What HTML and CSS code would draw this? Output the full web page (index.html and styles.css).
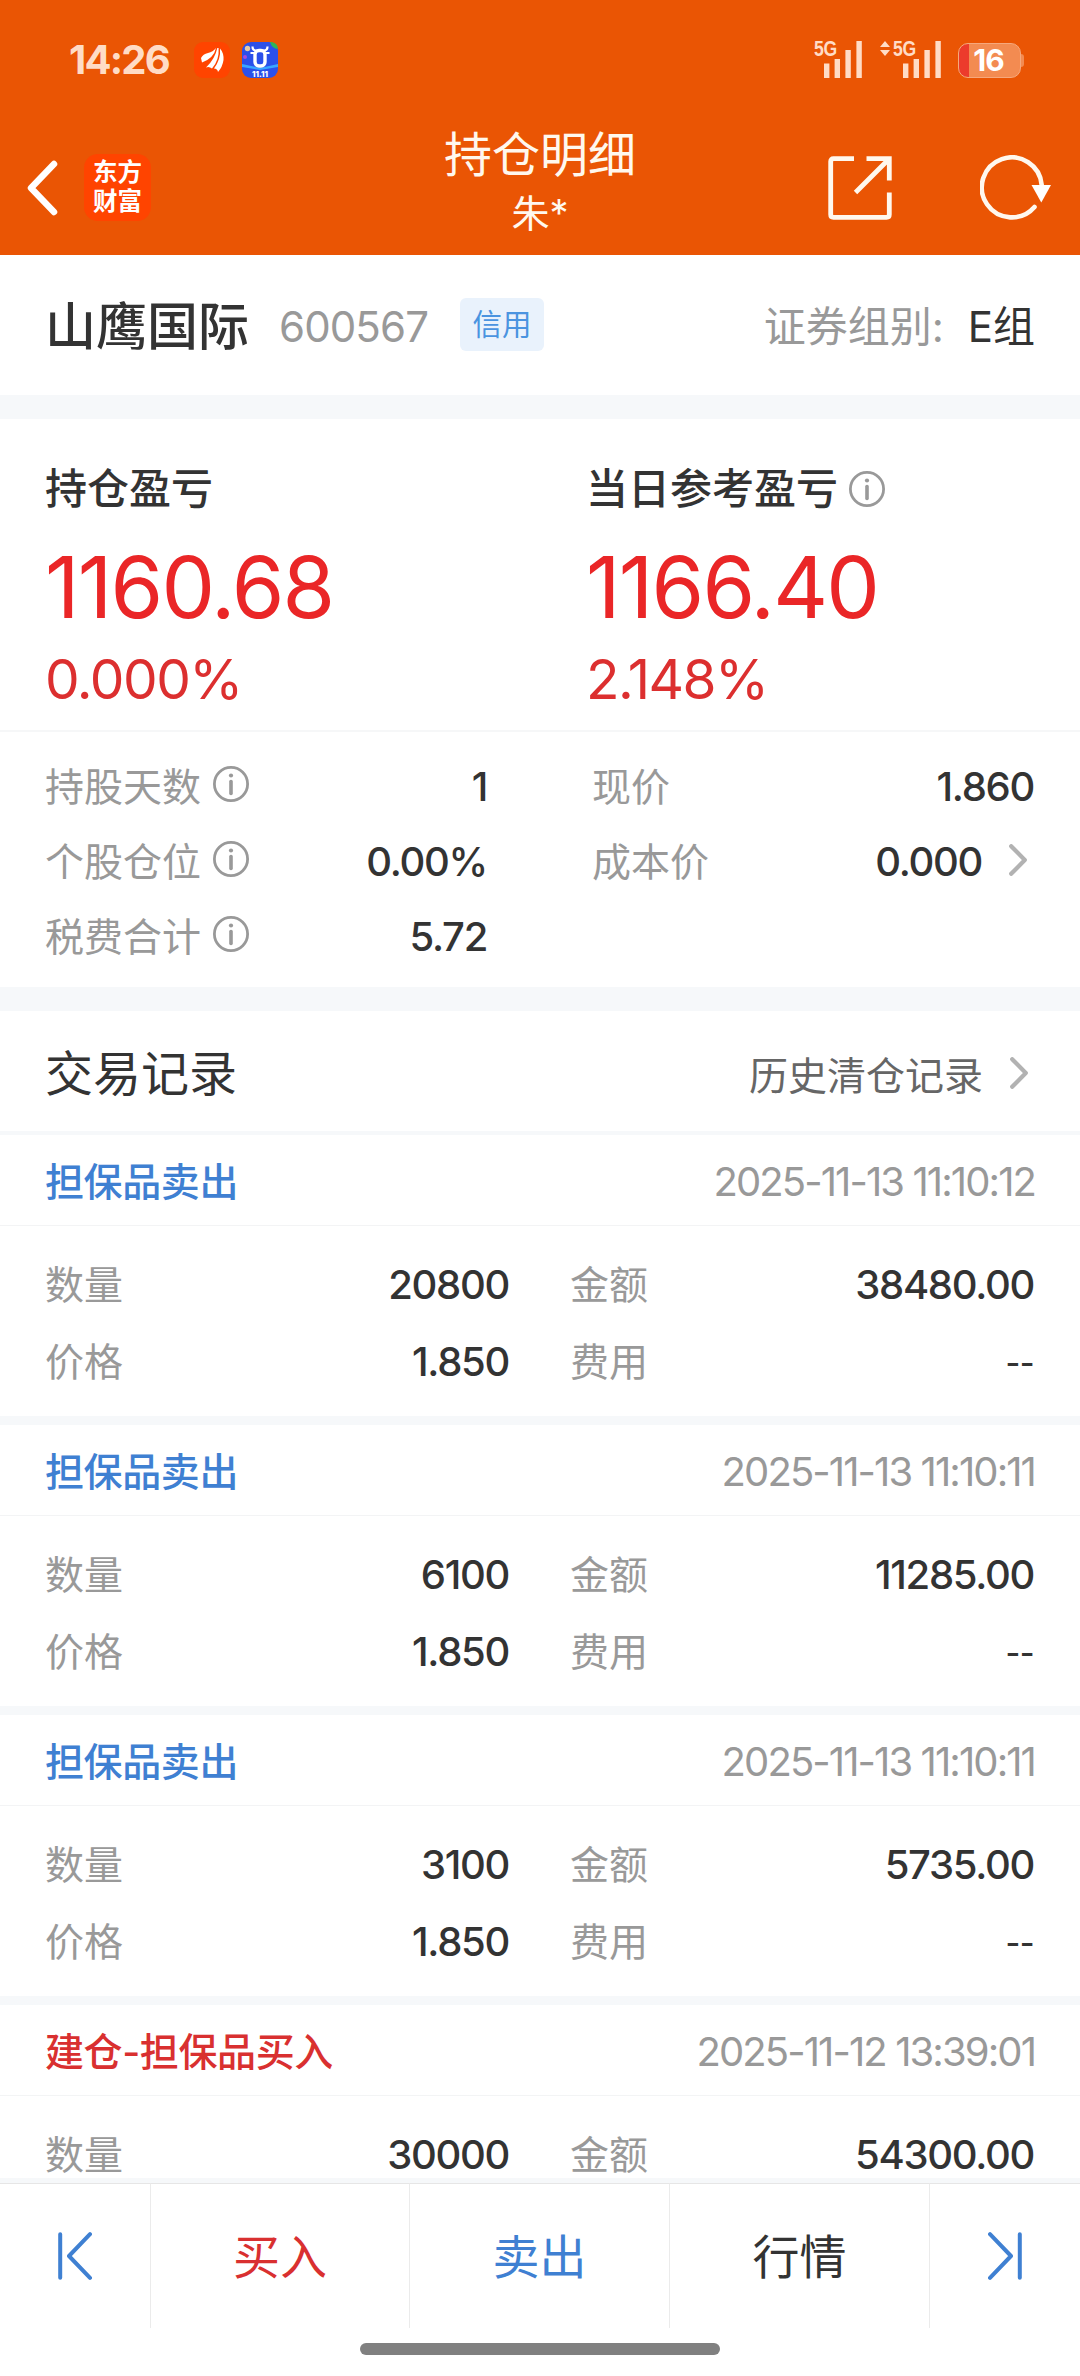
FILE: index.html
```html
<!DOCTYPE html>
<html lang="zh-CN">
<head>
  <meta charset="UTF-8" />
  <meta name="viewport" content="width=device-width, initial-scale=1" />
  <title>持仓明细</title>
  <link rel="stylesheet" href="styles.css">
</head>
<body>
  <!-- 图标 -->
  <svg class="sprite" width="0" height="0">
    <symbol id="info" viewBox="0 0 36 36">
      <circle cx="18" cy="18" r="16.6" fill="none" stroke="#999" stroke-width="2.8"/>
      <circle cx="18" cy="9.5" r="2.1" fill="#999"/>
      <path d="M18 15.5v12" stroke="#999" stroke-width="3.6" stroke-linecap="round"/>
    </symbol>
    <symbol id="more" viewBox="0 0 18 32">
      <path d="M2.2 2.2L15.8 16L2.2 29.8" fill="none" stroke="#b2b2b2" stroke-width="4.2" stroke-linecap="round" stroke-linejoin="round"/>
    </symbol>
    <symbol id="signal" viewBox="0 0 39 37">
      <path d="M0 22.5h5.4V37H0zM10.6 18H16v19h-5.4zM21.4 9h5.4v28h-5.4zM32.4 0h5.4v37h-5.4z" fill="#ffdcc6"/>
    </symbol>
  </svg>

  <div class="screen">
    <header class="header">
      <div class="status">
        <span class="time">14:26</span>
        <svg class="app-icon" viewBox="0 0 36 36">
          <rect width="36" height="36" rx="9" fill="#ff4400"/>
          <path d="M7 16Q9 12 14 11Q19 10 22 6Q20 16 8 20.500ZM12 25.500Q21 17 23.300 6H24.600Q25.500 18 18 26.500Q15 24 12 25.500ZM20 26.500Q27 17 26 6.500Q30 11 29.500 18Q28.500 25 24 30Q23.500 26.500 20 26.500Z" fill="#fff"/>
        </svg>
        <svg class="app-icon" viewBox="0 0 36 36">
          <rect width="36" height="36" rx="9" fill="#2b50ea"/>
          <path d="M0 22l18 4l18-4v3l-18 3L0 25z" fill="#39a6ff"/>
          <path d="M28 0h1q7 1 7 7q-6 0-8-7z" fill="#2fb457"/>
          <circle cx="5.500" cy="6.500" r="2.700" fill="#e4c9a8"/>
          <circle cx="3" cy="15" r="2" fill="#a64be0"/>
          <path d="M10.500 4.500Q10.500 8.500 14 8.500H22Q25.500 8.500 25.500 4.500M8.500 11H12M24 11H27.500" fill="none" stroke="#fff" stroke-width="2.200"/>
          <rect x="13" y="8.500" width="10" height="15.500" rx="4" fill="none" stroke="#fff" stroke-width="3.400"/>
          <text x="18" y="34.500" class="app-text">11.11</text>
        </svg>
        <div class="status-right">
          <div class="net">
            <span class="net-type">5G</span>
            <svg class="bars"><use href="#signal"/></svg>
          </div>
          <div class="net net-second">
            <svg class="updown" viewBox="0 0 10 15"><path d="M5 0L10 6H0zM5 15L10 9H0z" fill="#ffdcc6"/></svg>
            <span class="net-type">5G</span>
            <svg class="bars"><use href="#signal"/></svg>
          </div>
          <div class="battery"><span>16</span></div>
        </div>
      </div>
      <div class="nav">
        <div class="nav-left">
          <svg class="back" viewBox="0 0 32 56"><path d="M28 4L5 28L28 52" fill="none" stroke="#fff" stroke-width="6.500" stroke-linecap="round" stroke-linejoin="round"/></svg>
          <div class="logo">东方<br>财富</div>
        </div>
        <div class="nav-title">
          <h1>持仓明细</h1>
          <p>朱*</p>
        </div>
        <div class="nav-right">
          <svg class="share" viewBox="0 0 64 64">
            <path d="M26 2.700H5.500Q2.700 2.700 2.700 5.500V58.500Q2.700 61.300 5.500 61.300H58.500Q61.300 61.300 61.300 58.500V36.500M38.500 2.700H61.300V24.500M60 4L27.500 36.500" fill="none" stroke="#fff8ee" stroke-width="4.800"/>
          </svg>
          <svg class="refresh" viewBox="0 0 72 66">
            <path d="M54.500 52A30 30 0 1 1 61.700 30" fill="none" stroke="#fff8ee" stroke-width="4.600" stroke-linecap="round"/>
            <path d="M51.500 30H71L61.300 47.500z" fill="#fff"/>
          </svg>
        </div>
      </div>
    </header>

    <main class="content">
      <section class="stock">
        <h2>山鹰国际</h2>
        <span class="code">600567</span>
        <span class="tag">信用</span>
        <span class="group">证券组别: <b>E组</b></span>
      </section>

      <section class="profit">
        <div class="profit-col">
          <h3>持仓盈亏</h3>
          <p class="money">1160.68</p>
          <p class="percent">0.000%</p>
        </div>
        <div class="profit-col">
          <h3>当日参考盈亏 <svg class="info"><use href="#info"/></svg></h3>
          <p class="money">1166.40</p>
          <p class="percent">2.148%</p>
        </div>
      </section>

      <section class="detail">
        <div class="detail-row"><span>持股天数</span><svg class="info"><use href="#info"/></svg><b>1</b></div>
        <div class="detail-row"><span>现价</span><b>1.860</b></div>
        <div class="detail-row"><span>个股仓位</span><svg class="info"><use href="#info"/></svg><b>0.00%</b></div>
        <div class="detail-row"><span>成本价</span><b>0.000</b><svg class="more"><use href="#more"/></svg></div>
        <div class="detail-row"><span>税费合计</span><svg class="info"><use href="#info"/></svg><b>5.72</b></div>
      </section>

      <section class="records">
        <div class="records-head">
          <h2>交易记录</h2>
          <span>历史清仓记录</span>
          <svg class="more"><use href="#more"/></svg>
        </div>

        <article class="record">
          <div class="record-head"><h4 class="sell">担保品卖出</h4><time>2025-11-13 11:10:12</time></div>
          <div class="record-body">
            <div><span>数量</span><b>20800</b></div>
            <div><span>金额</span><b>38480.00</b></div>
            <div><span>价格</span><b>1.850</b></div>
            <div><span>费用</span><b class="none">--</b></div>
          </div>
        </article>

        <article class="record">
          <div class="record-head"><h4 class="sell">担保品卖出</h4><time>2025-11-13 11:10:11</time></div>
          <div class="record-body">
            <div><span>数量</span><b>6100</b></div>
            <div><span>金额</span><b>11285.00</b></div>
            <div><span>价格</span><b>1.850</b></div>
            <div><span>费用</span><b class="none">--</b></div>
          </div>
        </article>

        <article class="record">
          <div class="record-head"><h4 class="sell">担保品卖出</h4><time>2025-11-13 11:10:11</time></div>
          <div class="record-body">
            <div><span>数量</span><b>3100</b></div>
            <div><span>金额</span><b>5735.00</b></div>
            <div><span>价格</span><b>1.850</b></div>
            <div><span>费用</span><b class="none">--</b></div>
          </div>
        </article>

        <article class="record">
          <div class="record-head"><h4 class="buy">建仓-担保品买入</h4><time>2025-11-12 13:39:01</time></div>
          <div class="record-body">
            <div><span>数量</span><b>30000</b></div>
            <div><span>金额</span><b>54300.00</b></div>
          </div>
        </article>
      </section>
    </main>

    <nav class="tabs">
      <a class="tab"><svg class="step" viewBox="0 0 34 48"><path d="M2.200 2.200V45.800M32 2.200L11 24L32 45.800" fill="none" stroke="#3f80d2" stroke-width="4" stroke-linecap="round" stroke-linejoin="round"/></svg></a>
      <a class="tab buy">买入</a>
      <a class="tab sell">卖出</a>
      <a class="tab">行情</a>
      <a class="tab"><svg class="step" viewBox="0 0 34 48"><path d="M31.800 2.200V45.800M2 2.200L23 24L2 45.800" fill="none" stroke="#3f80d2" stroke-width="4" stroke-linecap="round" stroke-linejoin="round"/></svg></a>
    </nav>
    <div class="home"><i></i></div>
  </div>
</body>
</html>
```
FILE: styles.css
```css
* {
  box-sizing: border-box;
  margin: 0;
  padding: 0;
}

body {
  font-family: Inter, "Noto Sans CJK SC", sans-serif;
  font-size: 39px;
  line-height: 1;
  color: #333;
  background: #fff;
}

h1, h2, h3, h4, b {
  font-weight: 400;
}

svg {
  display: block;
  flex: none;
}

.sprite {
  position: absolute;
}

.screen {
  display: flex;
  flex-direction: column;
  width: 1080px;
  height: 2376px;
  overflow: hidden;
}

/* 顶部 */
.header {
  height: 255px;
  flex: none;
  background: #ea5504;
  color: #fff8ee;
}

.status {
  display: flex;
  align-items: center;
  height: 120px;
  padding: 0 59px 0 69px;
}

.time {
  width: 125px;
  font-size: 40px;
  font-weight: 700;
  line-height: 38px;
  letter-spacing: -1.800px;
  color: #ffdcc6;
}

.app-icon {
  width: 36px;
  height: 36px;
  margin-right: 12px;
}

.app-text {
  font-size: 8px;
  font-weight: 800;
  fill: #fff;
  text-anchor: middle;
}

.status-right {
  display: flex;
  align-items: center;
  margin-left: auto;
}

.net {
  display: flex;
  height: 37px;
  margin-top: -2px;
}

.net-second {
  margin-left: 17px;
}

.net-type {
  width: 10px;
  font-family: "Liberation Sans", sans-serif;
  font-size: 22px;
  font-weight: 700;
  line-height: 16px;
  letter-spacing: -0.500px;
  color: #ffdcc6;
  transform: scaleX(0.8);
  transform-origin: left;
}

.bars {
  width: 39px;
  height: 37px;
}

.updown {
  width: 10px;
  height: 15px;
  margin-right: 3px;
}

.battery {
  position: relative;
  width: 63px;
  height: 35px;
  margin-left: 16px;
  padding-right: 2px;
  border: 1px solid #f6a87c;
  border-radius: 10px;
  background: linear-gradient(to right, #ec3b2c 10px, #f38b51 10px);
  color: #fff;
  font-size: 30px;
  font-weight: 700;
  line-height: 33px;
  text-align: center;
}

.battery span {
  letter-spacing: -1px;
}

.battery::after {
  content: "";
  position: absolute;
  right: -4px;
  top: 10px;
  width: 3px;
  height: 13px;
  border-radius: 0 3px 3px 0;
  background: #f38b51;
}

.nav {
  display: grid;
  grid-template-columns: 1fr 300px 1fr;
  height: 135px;
}

.nav-left,
.nav-right {
  display: flex;
  align-items: center;
}

.nav-left {
  padding-left: 26px;
}

.nav-right {
  justify-content: flex-end;
  padding-right: 28px;
}

.back {
  width: 32px;
  height: 56px;
  margin-right: 26px;
}

.logo {
  width: 67px;
  height: 67px;
  padding-top: 4px;
  border-radius: 14px;
  background: #ff4400;
  color: #fff;
  font-size: 24.500px;
  font-weight: 700;
  line-height: 29px;
  text-align: center;
}

.nav-title {
  padding-top: 7px;
  text-align: center;
}

.nav-title h1 {
  font-size: 48px;
  line-height: 56px;
}

.nav-title p {
  font-size: 38px;
  line-height: 60px;
}

.share {
  width: 64px;
  height: 64px;
  margin-right: 88px;
}

.refresh {
  width: 72px;
  height: 66px;
}

/* 股票 */
.stock {
  display: flex;
  align-items: center;
  height: 164px;
  padding: 3px 45px 0 45px;
  border-bottom: 24px solid #f6f8fa;
}

.stock h2 {
  font-size: 51px;
  font-weight: 500;
}

.code {
  margin-left: 30px;
  font-size: 42px;
  letter-spacing: -0.900px;
  color: #999;
}

.tag {
  margin: -4px 0 0 32px;
  width: 84px;
  height: 53px;
  border-radius: 6px;
  background: #e9f2fc;
  color: #4a94e0;
  font-size: 29.500px;
  line-height: 53px;
  text-align: center;
}

.group {
  margin-left: auto;
  font-size: 42px;
  color: #999;
}

.group b {
  margin-left: 12px;
  color: #333;
}

/* 盈亏 */
.profit {
  display: grid;
  grid-template-columns: 541px 1fr;
  height: 313px;
  padding: 40px 0 0 45px;
  border-bottom: 2px solid #f6f7f8;
}

.profit h3 {
  display: flex;
  gap: 11px;
  font-size: 42px;
  font-weight: 500;
  line-height: 60px;
  align-items: center;
}

.info {
  width: 36px;
  height: 36px;
}

.money {
  font-size: 85px;
  line-height: 138px;
  letter-spacing: -1.800px;
  color: #ea2627;
}

.percent {
  font-size: 55px;
  line-height: 44px;
  letter-spacing: -1.500px;
  color: #dc2f2f;
}

.detail {
  display: grid;
  grid-template-columns: 442px 442px;
  column-gap: 105px;
  align-content: start;
  height: 279px;
  padding: 17px 45px 0;
  border-bottom: 24px solid #f6f8fa;
}

.detail-row {
  display: flex;
  align-items: center;
  height: 75px;
}

.detail-row span {
  color: #999;
}

.detail-row .info {
  margin: -5px 0 0 12px;
}

.detail-row b,
.record-body b {
  margin-left: auto;
  font-size: 40px;
  font-weight: 500;
  letter-spacing: -1.300px;
}

.more {
  width: 18px;
  height: 32px;
  margin: -4px 7px 0 27px;
}

/* 交易记录 */
.records-head {
  display: flex;
  align-items: center;
  height: 124px;
  padding: 5px 45px 0 45px;
  border-bottom: 4px solid #f6f8fa;
}

.records-head h2 {
  margin-right: auto;
  font-size: 48px;
}

.records-head span {
  padding-top: 3px;
  color: #666;
}

.records-head .more {
  margin-top: -1px;
}

.record {
  border-bottom: 9px solid #f6f8fa;
}

.record-head {
  display: flex;
  align-items: center;
  justify-content: space-between;
  height: 91px;
  padding: 2px 45px 0 45px;
  border-bottom: 1px solid #f3f4f5;
}

.record-head h4 {
  font-weight: 500;
  letter-spacing: -0.400px;
}

.record-head time {
  padding-top: 1px;
  font-size: 40px;
  letter-spacing: -1.900px;
  color: #999;
}

.record-body {
  display: grid;
  grid-template-columns: 464px 464px;
  column-gap: 61px;
  align-content: start;
  height: 190px;
  padding: 20px 45px 0;
}

.record-body div {
  display: flex;
  align-items: center;
  height: 77px;
}

.record-body span {
  color: #999;
}

.record-body .none {
  padding-top: 2px;
  font-size: 32px;
  letter-spacing: -0.500px;
}

.sell {
  color: #3f80d2;
}

.buy {
  color: #d93030;
}

/* 底部 */
.content {
  height: 1923px;
  flex: none;
  overflow: hidden;
}

.tabs {
  display: grid;
  grid-template-columns: 151px 259px 260px 260px 150px;
  flex: none;
  height: 150px;
  border-top: 5px solid #f6f8fa;
}

.tab {
  display: flex;
  align-items: center;
  justify-content: center;
  border-top: 1px solid #e6e6e6;
  border-right: 1px solid #ebebeb;
  font-size: 47px;
}

.tab:last-child {
  border-right: none;
}

.step {
  width: 34px;
  height: 48px;
}

.home {
  display: flex;
  justify-content: center;
  padding-top: 15px;
}

.home i {
  width: 360px;
  height: 12px;
  border-radius: 6px;
  background: #808080;
}
```
